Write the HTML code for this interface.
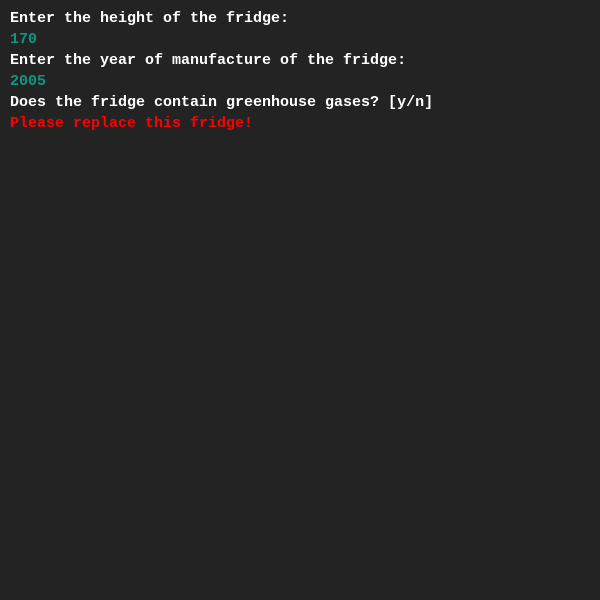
<!DOCTYPE html><html><head><style>
html,body{margin:0;background:#232323;width:600px;height:600px;overflow:hidden}
pre{margin:0;padding:8px 10px;font:bold 15px/21px "Courier New","Liberation Mono",monospace;color:#fff}
.g{color:#11967e}.r{color:#ff0000}
</style></head><body><pre>Enter the height of the fridge:
<span class="g">170</span>
Enter the year of manufacture of the fridge:
<span class="g">2005</span>
Does the fridge contain greenhouse gases? [y/n]
<span class="r">Please replace this fridge!</span></pre></body></html>
